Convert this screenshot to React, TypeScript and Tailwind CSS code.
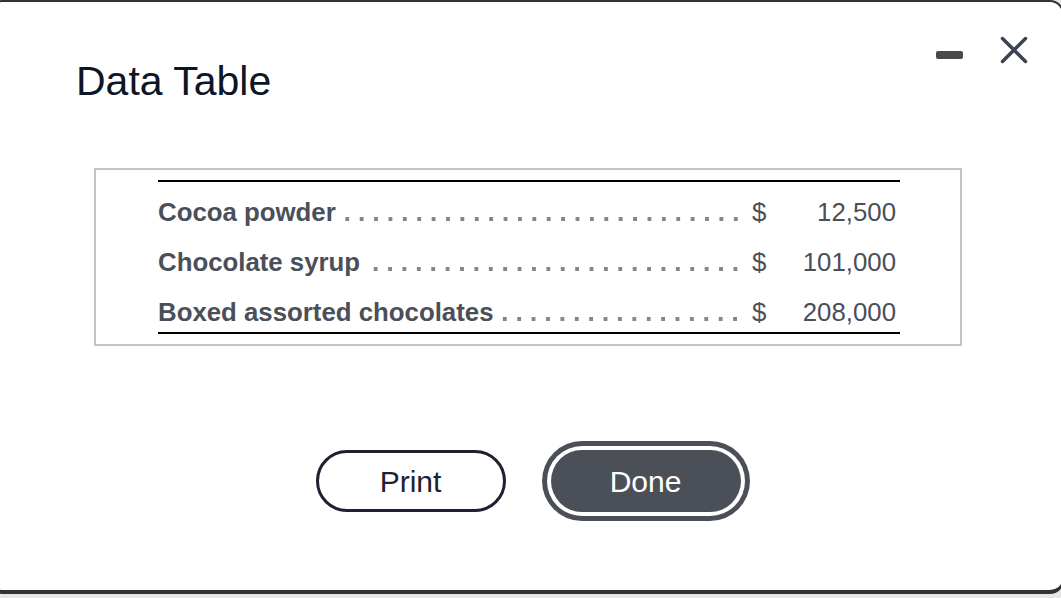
const rows = [
  { label: "Cocoa powder", amount: "12,500" },
  { label: "Chocolate syrup", amount: "101,000" },
  { label: "Boxed assorted chocolates", amount: "208,000" },
];

const App = () => {
  return (
    <div className="w-[1061px] h-[598px] overflow-hidden bg-[#e6e6e6] font-['Liberation_Sans',Arial,sans-serif]">
      <div className="-ml-[12px] w-[1076px] h-[594px] bg-white border-t-2 border-r-2 border-l-2 border-b-4 border-[#333333] rounded-[14px] flex flex-col">
        {/* Header */}
        <div className="flex justify-between items-start pl-[86px] pr-[34px]">
          <h1 className="mt-[59px] text-[41px] leading-[40px] text-[#0d1526]">Data Table</h1>
          <div className="mt-[34px] flex items-start gap-[37px]">
            <div className="mt-[15px] w-[27px] h-[8px] rounded-[2px] bg-[#4a4a4a]" />
            <svg width="28" height="28" viewBox="0 0 28 28" fill="none">
              <path d="M2.5 2.5L25.5 25.5M25.5 2.5L2.5 25.5" stroke="#3d4451" strokeWidth="3.5" strokeLinecap="round" />
            </svg>
          </div>
        </div>

        {/* Table */}
        <div className="ml-[104px] mt-[67px] w-[868px] border-2 border-[#c4c4c4] pl-[62px] pr-[60px] py-[10px]">
          <div className="border-t-2 border-b-2 border-black">
            {rows.map((row) => (
              <div key={row.label} className="flex items-start h-[50px] pt-[11px] text-[25.8px] leading-[39px] text-[#4a4f5a]">
                <span className="font-bold whitespace-nowrap">{row.label}</span>
                <div className="flex-1 ml-[6px] mt-[24px] h-[4px] bg-[linear-gradient(to_right,#83868d_3.5px,transparent_3.5px)] bg-[length:14.4px_4px] bg-repeat-x bg-[position:right_-4px_center]" />
                <span className="w-[40px] pl-[8px]">$</span>
                <span className="w-[116px] pr-[4px] text-right">{row.amount}</span>
              </div>
            ))}
          </div>
        </div>

        {/* Buttons */}
        <div className="mt-[104px] flex justify-center gap-[45px] pl-[4px]">
          <button className="w-[190px] h-[62px] rounded-full border-[3px] border-[#1e2230] bg-white text-[30px] text-[#1e2230]">
            Print
          </button>
          <button className="w-[190px] h-[62px] rounded-full bg-[#4b4f58] text-[30px] text-white shadow-[0_0_0_4px_#ffffff,0_0_0_9px_#4b4f58]">
            Done
          </button>
        </div>
      </div>
    </div>
  );
};

export default App;
